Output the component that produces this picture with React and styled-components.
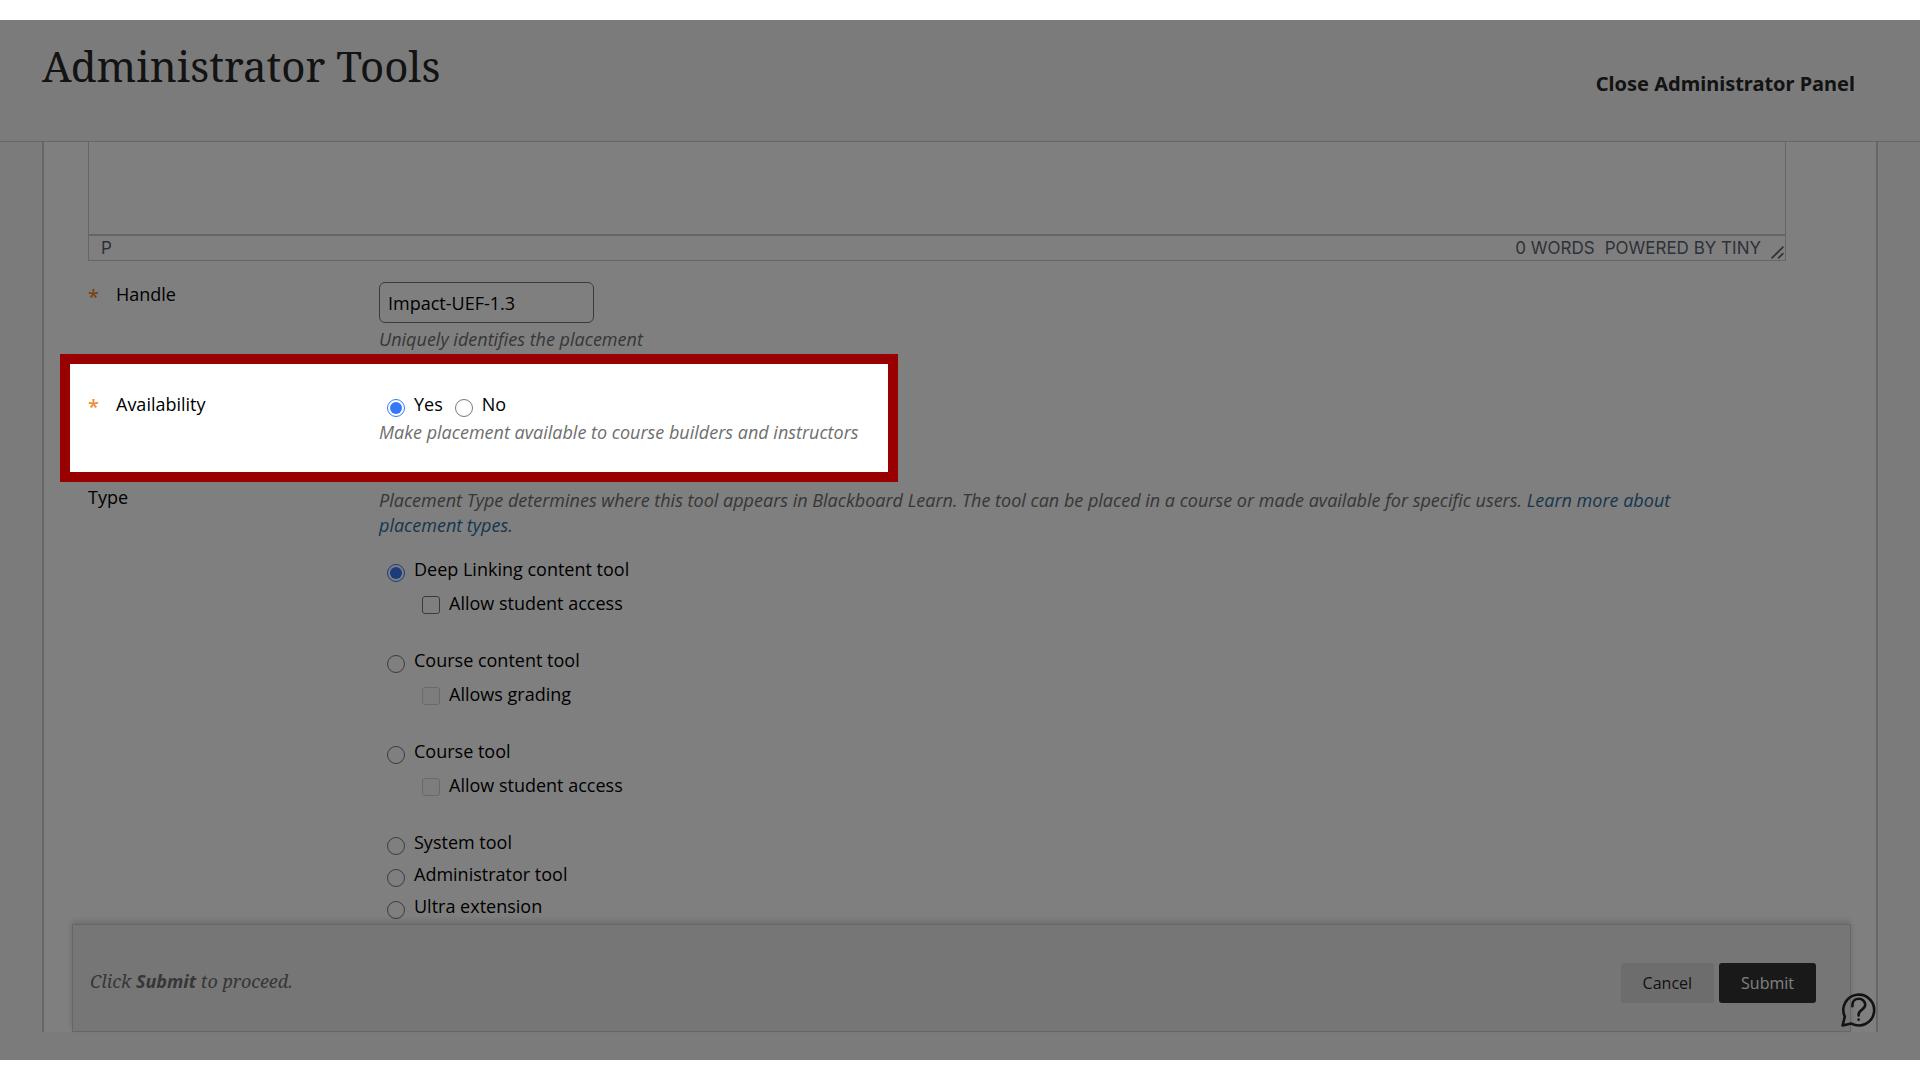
import React, { useState } from "react";
import styled, { createGlobalStyle } from "styled-components";

const colors = {
    white: "#ffffff",
    page: "#f7f7f7",
    bar: "#ececec",
    line: "#cccccc",
    ink: "#262626",
    text: "#000000",
    hint: "#6e6e6e",
    link: "#2f6d9c",
    status: "#5f6370",
    orange: "#f08c32",
    blue: "#3478f6",
    control: "#767676",
    red: "#990000",
};

const fonts = {
    body: '"Open Sans", sans-serif',
    strong: '"Noto Sans", "Open Sans", sans-serif',
    title: '"Noto Serif", "DejaVu Serif", serif',
    note: 'Georgia, "Noto Serif", "Liberation Serif", serif',
    editor: 'Inter, "Liberation Sans", sans-serif',
};

const GlobalStyle = createGlobalStyle`
* {
    box-sizing: border-box;
}
body {
    margin: 0;
    background-color: ${colors.white};
    color: ${colors.text};
    font-family: ${fonts.body};
    font-size: 18px;
    line-height: 25px;
}
`;

const Screen = styled.div`
position: relative;
display: flex;
flex-direction: column;
height: calc(100vh - 40px);
margin: 20px 0;
overflow: hidden;
background-color: ${colors.page};
`;

const Header = styled.header`
display: flex;
justify-content: space-between;
flex: none;
height: 122px;
padding: 17px 65px 0 42px;
border-bottom: 1px solid ${colors.line};
color: ${colors.ink};
h1 {
    margin: 0;
    font-family: ${fonts.title};
    font-size: 42px;
    font-weight: 400;
    line-height: 58px;
}
`;

const CloseButton = styled.button`
align-self: flex-start;
margin-top: 34px;
padding: 0;
border: 0;
background: none;
color: inherit;
font-family: ${fonts.strong};
font-size: 20px;
font-weight: 700;
line-height: 25px;
cursor: pointer;
`;

const Panel = styled.main`
display: flex;
flex-direction: column;
flex: 1;
min-height: 0;
margin: 0 42px 28px;
border: solid ${colors.line};
border-width: 0 2px;
background-color: ${colors.white};
`;

const Form = styled.div`
flex: 1;
min-height: 0;
padding: 0 90px 0 44px;
`;

const Editor = styled.div`
border: 1px solid ${colors.line};
border-top: 0;
margin-bottom: 21px;
textarea {
    display: block;
    width: 100%;
    height: 94px;
    border: 0;
    border-bottom: 2px solid ${colors.line};
    background-color: ${colors.white};
    resize: none;
    outline: none;
}
`;

const StatusBar = styled.div`
display: flex;
align-items: center;
gap: 10px;
height: 24px;
padding: 0 1px 0 12px;
color: ${colors.status};
font-family: ${fonts.editor};
font-size: 17px;
line-height: 24px;
.path {
    flex: 1;
}
a {
    color: inherit;
    text-decoration: none;
}
svg {
    align-self: flex-end;
    margin-bottom: 1px;
}
`;

const Row = styled.div`
position: relative;
display: grid;
grid-template-columns: 291px 1fr;
margin-bottom: 40px;
`;

const RowLabel = styled.div`
display: flex;
.star {
    width: 28px;
    color: ${colors.orange};
    font-size: 20px;
    font-weight: 600;
    line-height: 30px;
}
`;

const Field = styled.div`
max-width: 1320px;
`;

const TextInput = styled.input`
display: block;
width: 215px;
height: 41px;
padding: 0 8px;
border: 1px solid ${colors.control};
border-radius: 6px;
background-color: ${colors.white};
color: ${colors.text};
font: inherit;
`;

const Hint = styled.p`
margin: ${(props) => props.$top || 0}px 0 0;
color: ${colors.hint};
font-style: italic;
a {
    color: ${colors.link};
    text-decoration: none;
}
`;

const Choices = styled.div`
display: flex;
gap: 4px;
height: 28px;
`;

const Choice = styled.label`
display: flex;
align-items: flex-start;
gap: 9px;
padding-left: 8px;
`;

const Radio = styled.input`
appearance: none;
flex: none;
width: 18px;
height: 18px;
margin: 7px 0 0;
border: 1px solid ${colors.control};
border-radius: 50%;
background-color: ${colors.white};
&:checked {
    padding: 2px;
    border-color: ${colors.blue};
    background-color: ${colors.blue};
    background-clip: content-box;
}
`;

const Checkbox = styled.input`
appearance: none;
flex: none;
width: 18px;
height: 18px;
margin: 5px 0 0;
border: 1px solid ${colors.control};
border-radius: 3px;
background-color: ${colors.white};
&:checked {
    background-color: ${colors.blue};
}
&:disabled {
    border-color: #d2d2d2;
    background-color: #fafafa;
}
`;

const Options = styled.div`
margin-top: 19px;
`;

const Option = styled.div`
margin-bottom: ${(props) => (props.$spaced ? 25 : 0)}px;
`;

const OptionLine = styled(Choice)`
height: 32px;
`;

const SubLine = styled(OptionLine)`
margin-top: 2px;
padding-left: 43px;
`;

// Frame around the row being explained, it also dims the rest of the screen
const Spotlight = styled.div`
position: absolute;
top: -38px;
left: -28px;
width: 838px;
height: 128px;
border: 10px solid ${colors.red};
box-shadow: 0 0 0 4000px rgba(0, 0, 0, 0.5);
pointer-events: none;
z-index: 5;
`;

const SubmitBar = styled.footer`
position: relative;
display: flex;
align-items: center;
flex: none;
gap: 5px;
height: 108px;
margin: 0 25px 0 28px;
padding: 10px 34px 0 17px;
border: 1px solid ${colors.line};
background-color: ${colors.bar};
box-shadow: 0 -3px 6px rgba(0, 0, 0, 0.15);
p {
    flex: 1;
    margin: 0 0 4px;
    color: ${colors.hint};
    font-family: ${fonts.note};
    font-style: italic;
}
strong {
    font-family: ${fonts.strong};
}
`;

const Button = styled.button`
height: 40px;
padding: 0 22px;
border: 0;
border-radius: 3px;
background-color: ${(props) => (props.$primary ? "#333333" : "#dadada")};
color: ${(props) => (props.$primary ? colors.white : colors.ink)};
font-family: ${fonts.body};
font-size: 16px;
line-height: 24px;
cursor: pointer;
`;

const HelpButton = styled.button`
position: absolute;
right: 44px;
bottom: 32px;
width: 36px;
height: 36px;
padding: 0;
border: 0;
background: none;
color: ${colors.ink};
cursor: pointer;
svg {
    display: block;
}
`;

const types = [
    { id: "deep", label: "Deep Linking content tool", sub: "Allow student access" },
    { id: "content", label: "Course content tool", sub: "Allows grading" },
    { id: "course", label: "Course tool", sub: "Allow student access" },
    { id: "system", label: "System tool" },
    { id: "admin", label: "Administrator tool" },
    { id: "ultra", label: "Ultra extension" },
];

const App = () => {
    const [available, setAvailable] = useState("Yes");
    const [type, setType] = useState("deep");

    return (
        <>
            <GlobalStyle />
            <Screen>
                <Header>
                    <h1>Administrator Tools</h1>
                    <CloseButton type="button">Close Administrator Panel</CloseButton>
                </Header>
                <Panel>
                    <Form>
                        <Editor>
                            <textarea aria-label="Description" />
                            <StatusBar>
                                <span className="path">P</span>
                                <span>0 WORDS</span>
                                <a href="#tiny">POWERED BY TINY</a>
                                <svg width="13" height="13" viewBox="0 0 12 12" fill="none" stroke="currentColor" strokeWidth="1.6" strokeLinecap="round">
                                    <path d="M1 11L11 1M7 11l4-4" />
                                </svg>
                            </StatusBar>
                        </Editor>
                        <Row>
                            <RowLabel>
                                <span className="star">*</span>
                                <label htmlFor="handle">Handle</label>
                            </RowLabel>
                            <Field>
                                <TextInput id="handle" type="text" defaultValue="Impact-UEF-1.3" />
                                <Hint $top={4}>Uniquely identifies the placement</Hint>
                            </Field>
                        </Row>
                        <Row role="radiogroup" aria-labelledby="availability">
                            <RowLabel>
                                <span className="star">*</span>
                                <span id="availability">Availability</span>
                            </RowLabel>
                            <Field>
                                <Choices>
                                    {["Yes", "No"].map((name) => (
                                        <Choice key={name}>
                                            <Radio
                                                type="radio"
                                                name="available"
                                                checked={available === name}
                                                onChange={() => setAvailable(name)}
                                            />
                                            {name}
                                        </Choice>
                                    ))}
                                </Choices>
                                <Hint>Make placement available to course builders and instructors</Hint>
                            </Field>
                            <Spotlight />
                        </Row>
                        <Row role="radiogroup" aria-labelledby="type">
                            <RowLabel>
                                <span id="type">Type</span>
                            </RowLabel>
                            <Field>
                                <Hint $top={3}>
                                    Placement Type determines where this tool appears in Blackboard Learn. The tool can be placed in a
                                    course or made available for specific users. <a href="#placement-types">Learn more about placement types.</a>
                                </Hint>
                                <Options>
                                    {types.map(({ id, label, sub }) => (
                                        <Option key={id} $spaced={Boolean(sub)}>
                                            <OptionLine>
                                                <Radio type="radio" name="type" checked={type === id} onChange={() => setType(id)} />
                                                {label}
                                            </OptionLine>
                                            {sub && (
                                                <SubLine>
                                                    <Checkbox type="checkbox" disabled={type !== id} />
                                                    {sub}
                                                </SubLine>
                                            )}
                                        </Option>
                                    ))}
                                </Options>
                            </Field>
                        </Row>
                    </Form>
                    <SubmitBar>
                        <p>
                            Click <strong>Submit</strong> to proceed.
                        </p>
                        <Button type="button">Cancel</Button>
                        <Button type="submit" $primary>Submit</Button>
                    </SubmitBar>
                </Panel>
                <HelpButton type="button" aria-label="Help">
                    <svg width="36" height="36" viewBox="0 0 36 36" fill="none" stroke="currentColor" strokeWidth="2.6" strokeLinecap="round" strokeLinejoin="round">
                        <path d="M4.800 24.600A15.400 15.400 0 1 1 11.400 31.600L2.600 33.500Z" />
                        <path d="M12.400 14.200v-1c0-4 2.800-6.400 6.400-6.400s6.400 2.600 6.400 6c0 5-6.600 4.600-6.600 10v.6" />
                        <path d="M18.600 27.600v.1" />
                    </svg>
                </HelpButton>
            </Screen>
        </>
    );
};

export default App;
